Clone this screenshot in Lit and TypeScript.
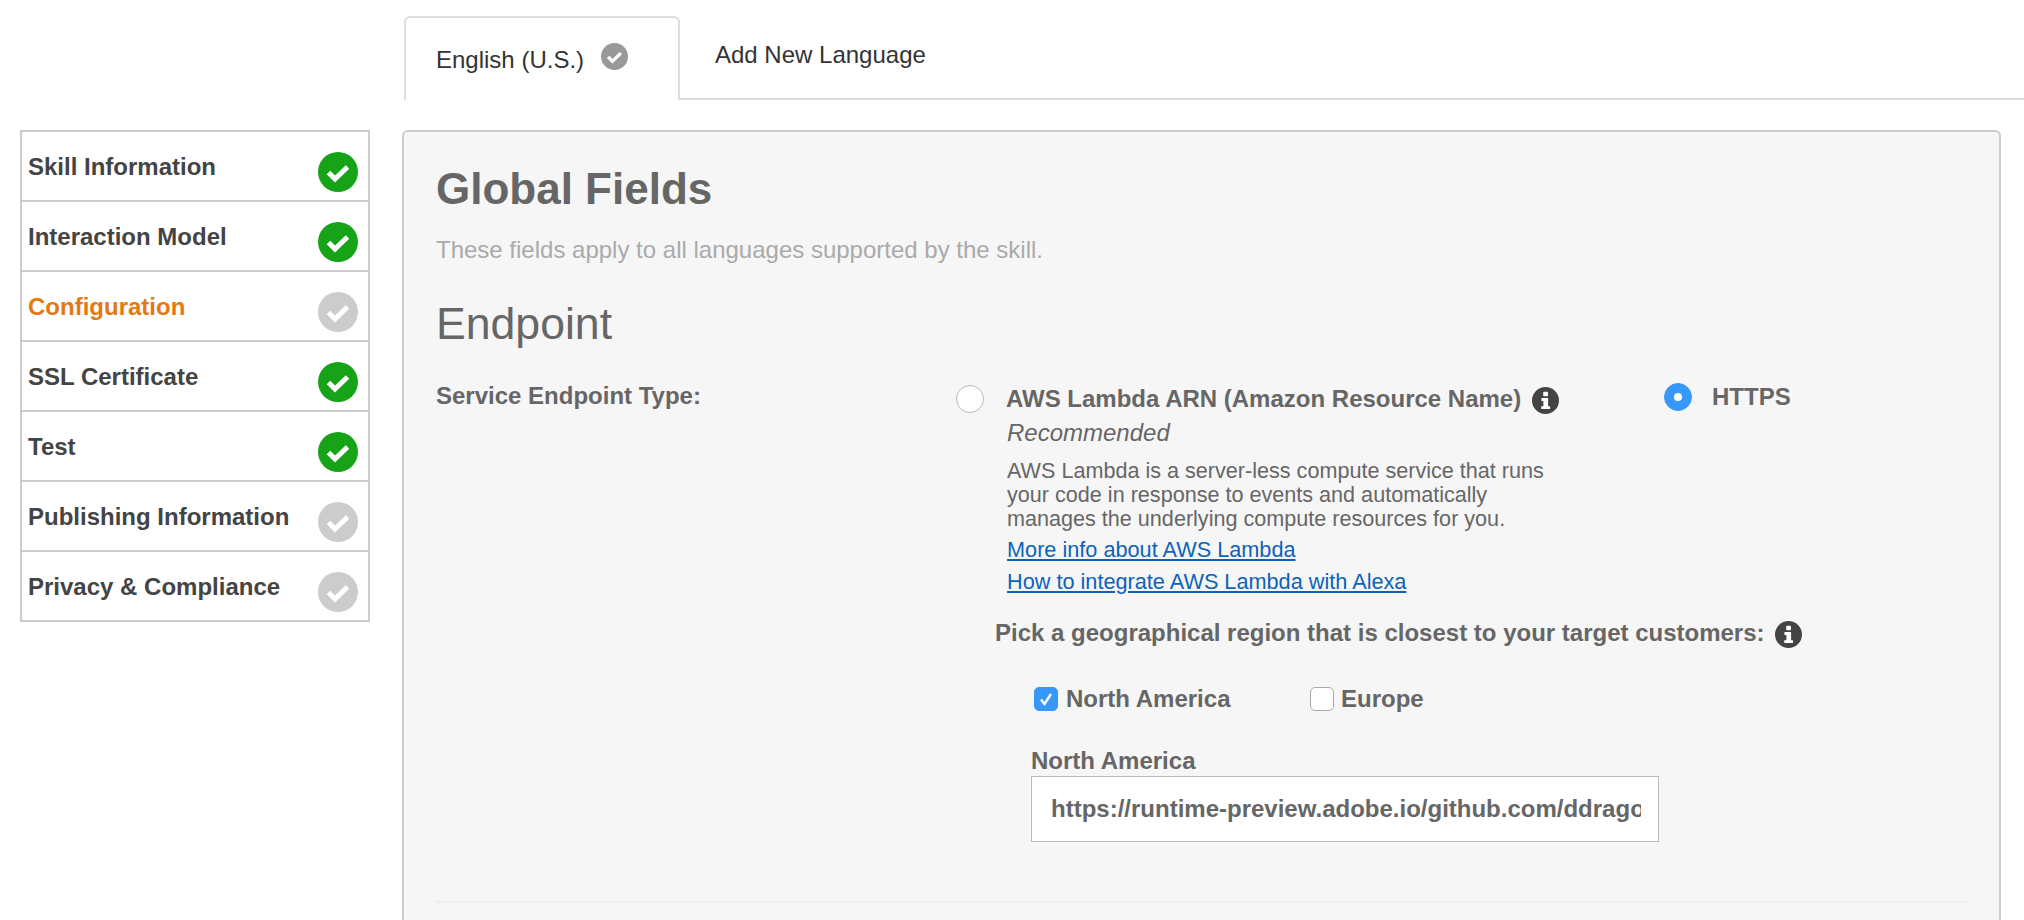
import { LitElement, html, css, svg } from 'lit'
import { customElement } from 'lit/decorators.js'

const steps = [
  { name: 'Skill Information', done: true },
  { name: 'Interaction Model', done: true },
  { name: 'Configuration', done: false, current: true },
  { name: 'SSL Certificate', done: true },
  { name: 'Test', done: true },
  { name: 'Publishing Information', done: false },
  { name: 'Privacy & Compliance', done: false },
]

const checkCircle = (cls: string) => html`
  <svg class=${cls} viewBox="0 0 40 40">
    <circle cx="20" cy="20" r="20" fill="currentColor"></circle>
    <path d="M10.5 20.5l6.5 6.5 12.5-12" fill="none" stroke="#fff" stroke-width="5"></path>
  </svg>`

const infoIcon = svg`
  <circle cx="14" cy="14" r="14" fill="#444"></circle>
  <rect x="11.6" y="5" width="5" height="4.6" rx="1" fill="#fff"></rect>
  <path d="M9.8 11.5h6.9v8.4h2v3H9.6v-3h2.2v-5.4h-2z" fill="#fff"></path>`

@customElement('app-root')
export class AppRoot extends LitElement {
  static styles = css`
    :host {
      display: block;
      width: 2024px;
      height: 920px;
      overflow: hidden;
      background: #fff;
      font-family: "Liberation Sans", Arial, sans-serif;
      color: #666;
    }
    .tabs {
      display: flex;
      height: 100px;
      box-sizing: border-box;
      margin-left: 404px;
      padding-top: 16px;
      border-bottom: 2px solid #ddd;
    }
    .tab {
      width: 276px;
      height: 84px;
      box-sizing: border-box;
      display: flex;
      align-items: flex-start;
      padding: 28px 0 0 30px;
      gap: 17px;
      background: #fff;
      border: 2px solid #ddd;
      border-bottom: none;
      border-radius: 6px 6px 0 0;
      font-size: 24px;
      line-height: 28px;
      color: #333;
    }
    .tab svg { width: 27px; height: 27px; margin-top: -3px; color: #999; }
    .add {
      padding: 25px 0 0 35px;
      font-size: 24px;
      line-height: 28px;
      color: #333;
    }
    .body {
      display: flex;
      align-items: flex-start;
      padding: 30px 0 0 20px;
    }
    .nav {
      width: 350px;
      flex: none;
      box-sizing: border-box;
      border: 2px solid #ccc;
      border-bottom: none;
      margin-right: 32px;
    }
    .step {
      height: 70px;
      box-sizing: border-box;
      display: flex;
      justify-content: space-between;
      padding: 20px 10px 0 6px;
      border-bottom: 2px solid #ccc;
      font-size: 24px;
      font-weight: bold;
      line-height: 28px;
      color: #444;
    }
    .step span { margin-top: 1px; }
    .step.current { color: #e47911; }
    .step svg { width: 40px; height: 40px; color: #ccc; }
    .step svg.done { color: #17a317; }
    .panel {
      width: 1599px;
      height: 800px;
      flex: none;
      box-sizing: border-box;
      padding: 0 32px;
      background: #f6f6f6;
      border: 2px solid #ccc;
      border-radius: 6px;
    }
    h1 {
      margin: 32px 0 0;
      font-size: 44px;
      line-height: 50px;
      font-weight: bold;
      color: #666;
    }
    .sub {
      margin-top: 22px;
      font-size: 24px;
      line-height: 28px;
      color: #aaa;
    }
    h2 {
      margin: 35px 0 0;
      font-size: 44.6px;
      line-height: 50px;
      font-weight: normal;
      color: #666;
    }
    .endpoint {
      display: flex;
      margin-top: 33px;
    }
    .field-label {
      width: 520px;
      flex: none;
      font-size: 24px;
      font-weight: bold;
      line-height: 28px;
    }
    .radio {
      width: 28px;
      height: 28px;
      flex: none;
      box-sizing: border-box;
      border-radius: 50%;
      background: #fff;
      border: 1px solid #bbb;
    }
    .radio.on {
      display: flex;
      align-items: center;
      justify-content: center;
      background: #3798fb;
      border-color: #3798fb;
    }
    .radio.on::after {
      content: '';
      width: 8px;
      height: 8px;
      border-radius: 50%;
      background: #fff;
    }
    .lambda { width: 708px; flex: none; padding-top: 3px; }
    .lambda-head {
      display: flex;
      align-items: flex-start;
      gap: 22px;
    }
    .opt-title {
      display: flex;
      align-items: center;
      gap: 11px;
      margin-top: -1px;
      font-size: 24px;
      font-weight: bold;
      line-height: 28px;
    }
    .info { width: 27px; height: 27px; flex: none; margin-top: 3px; }
    .details { margin-left: 51px; }
    .rec {
      margin-top: 5px;
      font-size: 24px;
      line-height: 28px;
      font-style: italic;
    }
    .details p {
      margin: 12px 0 0;
      font-size: 21.6px;
      line-height: 24px;
    }
    .details a {
      display: block;
      font-size: 21.7px;
      line-height: 24px;
      color: #0e62ba;
      text-decoration: underline;
      margin-top: 7px;
    }
    .details a + a { margin-top: 8px; }
    .https { display: flex; gap: 20px; padding-top: 1px; }
    .https span { font-size: 24px; font-weight: bold; line-height: 28px; }
    .pick {
      display: flex;
      align-items: center;
      gap: 10px;
      margin: 24px 0 0 559px;
      font-size: 24px;
      font-weight: bold;
      line-height: 28px;
    }
    .regions {
      display: flex;
      margin: 37px 0 0 598px;
    }
    .check {
      display: flex;
      align-items: center;
      gap: 7px;
      font-size: 24px;
      font-weight: bold;
      line-height: 28px;
    }
    .check.na { width: 276px; gap: 8px; }
    .box {
      width: 24px;
      height: 24px;
      box-sizing: border-box;
      border-radius: 5px;
      background: #fff;
      border: 1px solid #aaa;
    }
    .box.on { background: #3798fb; border-color: #3798fb; }
    .box svg { display: block; width: 22px; height: 22px; }
    .url-field { margin: 34px 0 0 595px; }
    .url-label {
      font-size: 24px;
      font-weight: bold;
      line-height: 28px;
    }
    .url {
      display: block;
      width: 628px;
      height: 66px;
      margin: 1px 0 0;
      box-sizing: border-box;
      padding: 0 17px 0 19px;
      background: #fff;
      border: 1px solid #bbb;
      border-radius: 0;
      outline: none;
      font-family: inherit;
      font-size: 24px;
      font-weight: bold;
      color: #666;
    }
    hr {
      margin: 59px 0 0;
      height: 2px;
      border: none;
      background: #eee;
    }
  `

  render() {
    return html`
      <div class="tabs">
        <div class="tab">English (U.S.) ${checkCircle('')}</div>
        <div class="add">Add New Language</div>
      </div>
      <div class="body">
        <div class="nav">
          ${steps.map(s => html`
            <div class="step ${s.current ? 'current' : ''}">
              <span>${s.name}</span>
              ${checkCircle(s.done ? 'done' : '')}
            </div>`)}
        </div>
        <div class="panel">
          <h1>Global Fields</h1>
          <div class="sub">These fields apply to all languages supported by the skill.</div>
          <h2>Endpoint</h2>
          <div class="endpoint">
            <div class="field-label">Service Endpoint Type:</div>
            <div class="lambda">
              <div class="lambda-head">
                <div class="radio"></div>
                <div class="opt-title">
                  AWS Lambda ARN (Amazon Resource Name)
                  <svg class="info" viewBox="0 0 28 28">${infoIcon}</svg>
                </div>
              </div>
              <div class="details">
                <div class="rec">Recommended</div>
                <p>AWS Lambda is a server-less compute service that runs<br>your code in response to events and automatically<br>manages the underlying compute resources for you.</p>
                <a href="#">More info about AWS Lambda</a>
                <a href="#">How to integrate AWS Lambda with Alexa</a>
              </div>
            </div>
            <div class="https">
              <div class="radio on"></div>
              <span>HTTPS</span>
            </div>
          </div>
          <div class="pick">
            Pick a geographical region that is closest to your target customers:
            <svg class="info" viewBox="0 0 28 28">${infoIcon}</svg>
          </div>
          <div class="regions">
            <div class="check na">
              <div class="box on">
                <svg viewBox="0 0 22 22"><path d="M6 11.5l3.5 4.5 6.5-10" fill="none" stroke="#fff" stroke-width="2.4"></path></svg>
              </div>
              North America
            </div>
            <div class="check">
              <div class="box"></div>
              Europe
            </div>
          </div>
          <div class="url-field">
            <div class="url-label">North America</div>
            <input class="url" readonly value="https://runtime-preview.adobe.io/github.com/ddragosd/hello-world">
          </div>
          <hr>
        </div>
      </div>
    `
  }
}
